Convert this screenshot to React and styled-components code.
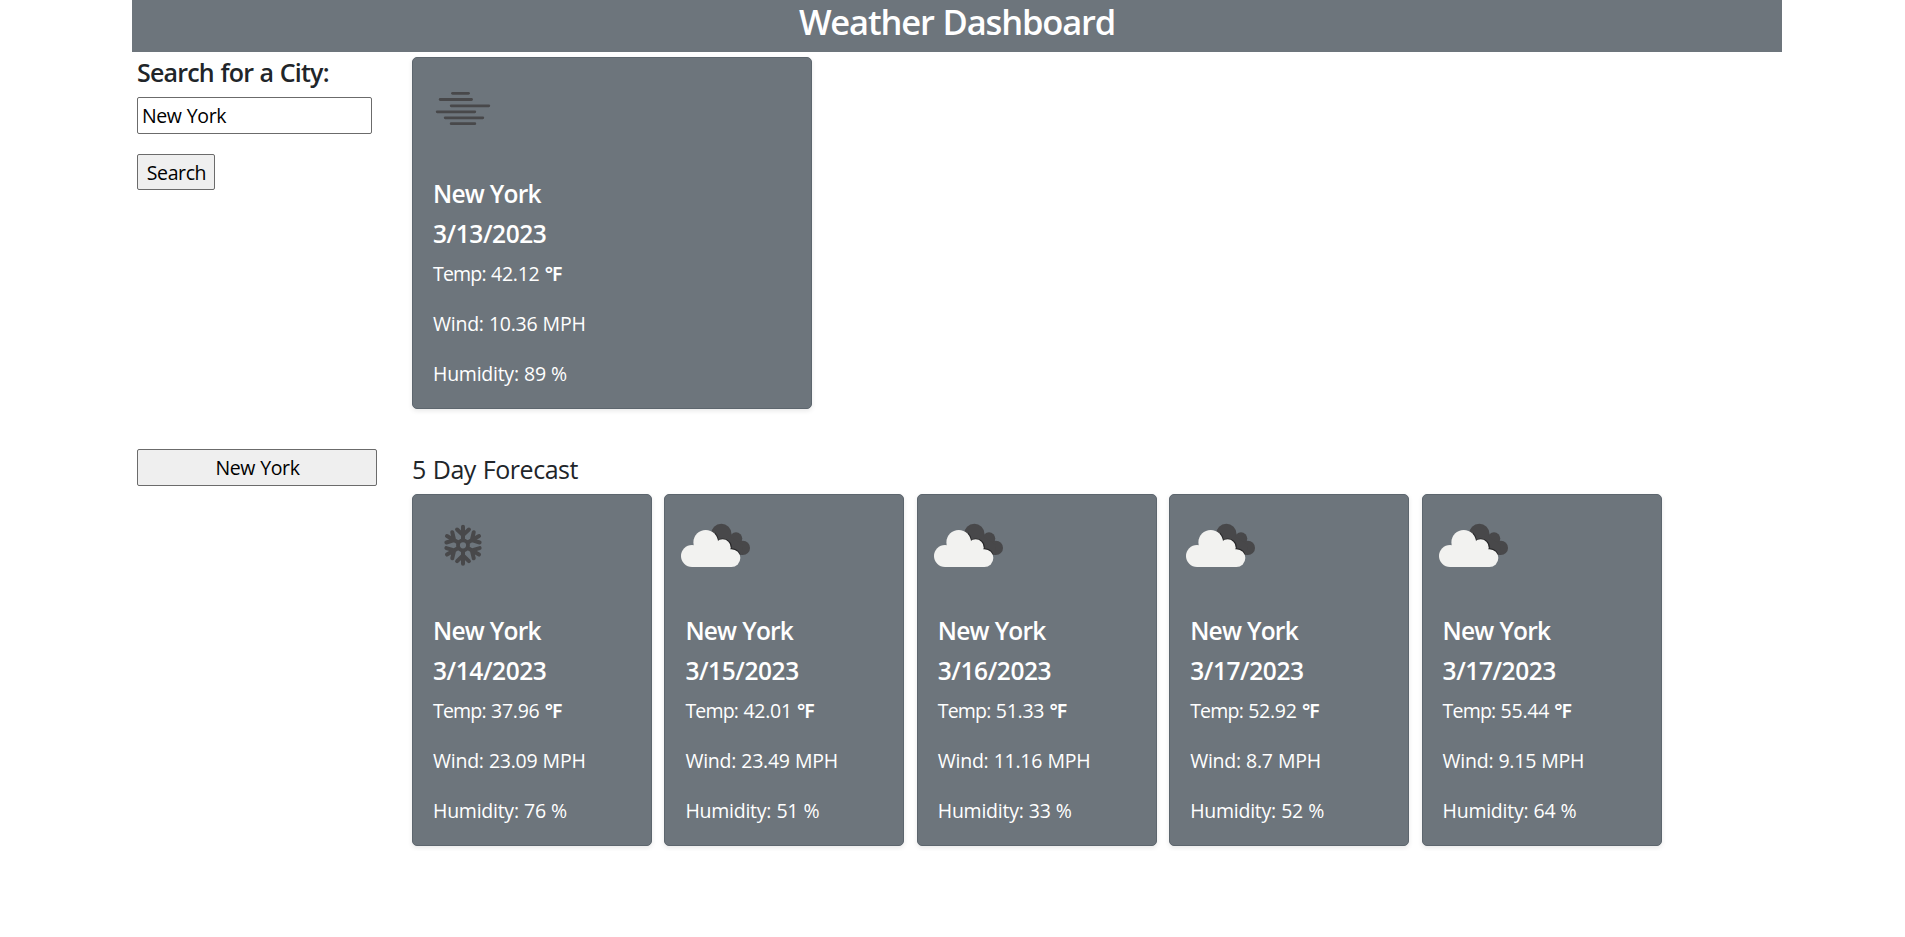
import React from "react";
import styled, { createGlobalStyle } from "styled-components";

const GlobalStyle = createGlobalStyle`
  *, *::before, *::after { box-sizing: border-box; }
  body {
    margin: 0;
    background: #fff;
    color: #212529;
    font-family: "Open Sans", "Noto Sans", "DejaVu Sans", sans-serif;
    font-size: 19.5px;
    line-height: 30px;
    letter-spacing: -0.25px;
    word-spacing: 0.4px;
  }
  h1, h2, h3, p { margin: 0; }
`;

const Page = styled.div`
  width: 1650px;
  margin-left: 132px;
`;

const Header = styled.header`
  height: 52px;
  background: #6d757c;
  color: #fff;
  text-align: center;
`;

const Title = styled.h1`
  font-size: 34.5px;
  line-height: 43px;
  font-weight: 600;
  letter-spacing: -1.15px;
  word-spacing: 1px;
`;

const Row = styled.div`
  display: grid;
  grid-template-columns: 275px 1fr;
`;

const Cell = styled.div`
  padding: 5px;
  padding-top: ${(p) => p.$top || 5}px;
`;

const Heading = styled.h2`
  font-size: 25px;
  line-height: 30px;
  font-weight: ${(p) => p.$weight || 500};
  letter-spacing: ${(p) => p.$spacing || "-0.45px"};
  word-spacing: 0.8px;
  margin-bottom: 10px;
`;

const SearchForm = styled.form`
  display: flex;
  flex-direction: column;
  align-items: flex-start;
  gap: 20px;
`;

const controlText = `
  font-family: inherit;
  font-size: 19.5px;
  line-height: 30px;
  letter-spacing: -0.4px;
  word-spacing: 0.6px;
  color: #000;
  border: 1px solid #6b6b6b;
  border-radius: 2px;
`;

const CityInput = styled.input`
  ${controlText}
  width: 235px;
  height: 37px;
  padding: 1px 4px;
  background: #fff;
  outline: none;
`;

const Button = styled.button`
  ${controlText}
  width: ${(p) => p.$width}px;
  height: ${(p) => p.$height}px;
  padding: 1px 0 0 1px;
  background: #efefef;
`;

const CardList = styled.div`
  display: flex;
  gap: 12.4px;
`;

const CardBox = styled.article`
  width: ${(p) => p.$width}px;
  height: 352px;
  flex: none;
  border: 1px solid #5d666e;
  border-radius: 5px;
  background: #6d757c;
  color: #fff;
  box-shadow: 0 2px 5px rgba(0, 0, 0, 0.09);
`;

const Icon = styled.svg`
  display: block;
  width: 100px;
  height: 100px;
`;

const CardBody = styled.div`
  padding: 21px 20px 19px;
`;

const CardTitle = styled.h3`
  font-size: 24.5px;
  line-height: 30px;
  font-weight: 600;
  letter-spacing: ${(p) => p.$spacing};
  margin-bottom: 10px;
`;

const Reading = styled.p`
  white-space: nowrap;
  & + & { margin-top: 20px; }
`;

const TempLabel = styled.span`
  letter-spacing: -0.8px;
`;

const Unit = styled.span`
  font-weight: 600;
`;

const MIST = [
  [38.3, 56.7, 35.3],
  [26, 59.7, 41.5],
  [37, 77, 47.8],
  [23, 63, 53.8],
  [31, 71, 59.8],
  [37, 63, 65.7],
];

function Mist() {
  return (
    <Icon viewBox="0 0 100 100" stroke="#48484a" strokeWidth="2.8" strokeLinecap="round">
      {MIST.map(([a, b, y]) => (
        <line key={y} x1={a + 1.2} x2={b - 1.2} y1={y} y2={y} />
      ))}
    </Icon>
  );
}

function Snow() {
  return (
    <Icon viewBox="0 0 100 100" stroke="#48484a" strokeLinecap="round" strokeLinejoin="round" fill="none">
      <g transform="translate(50 50.3)">
        <circle r="5" strokeWidth="3.8" />
        {[0, 60, 120, 180, 240, 300].map((a) => (
          <g key={a} transform={`rotate(${a})`}>
            <path d="M0 -6V-18.5M-5.9 -15.8L0 -10.2L5.9 -15.8" strokeWidth="4" />
          </g>
        ))}
      </g>
    </Icon>
  );
}

const FRONT_PUFFS = [
  [27, 61, 11],
  [40.7, 47.3, 12.3],
  [57.6, 52.4, 8.1],
  [66.4, 63.1, 8.9],
];

function Clouds() {
  return (
    <Icon viewBox="0 0 100 100">
      <g fill="#48484a">
        <circle cx="56.3" cy="39" r="10.2" />
        <circle cx="71" cy="43.6" r="6.3" />
        <circle cx="77.8" cy="52.9" r="7.2" />
        <path d="M52 42L66 42L78 50L77.8 60.1L70 58Z" />
      </g>
      <g fill="#242426">
        <path d="M50 37.5A13.2 13.2 0 0 1 53.9 45.4L50 50Z" />
        <path d="M54 44.3A9 9 0 0 1 66.6 54L56 54Z" />
        <path d="M66 53.3A9.7 9.7 0 0 1 75.5 60L66 62Z" />
      </g>
      <g fill="#f2f2f0">
        {FRONT_PUFFS.map(([x, y, r]) => (
          <circle key={x} cx={x} cy={y} r={r} />
        ))}
        <path d="M27 52H60L66.4 58V72H27Z" />
      </g>
    </Icon>
  );
}

const ICONS = { mist: Mist, snow: Snow, clouds: Clouds };

function WeatherCard({ width = 240, icon, date, temp, wind, humidity }) {
  const Picture = ICONS[icon];
  return (
    <CardBox $width={width}>
      <Picture />
      <CardBody>
        <CardTitle $spacing="-0.8px">New York</CardTitle>
        <CardTitle $spacing="-0.42px">{date}</CardTitle>
        <Reading>
          <TempLabel>Temp:</TempLabel> {temp} <Unit>℉</Unit>
        </Reading>
        <Reading>Wind: {wind} MPH</Reading>
        <Reading>Humidity: {humidity} %</Reading>
      </CardBody>
    </CardBox>
  );
}

const FORECAST = [
  { icon: "snow", date: "3/14/2023", temp: "37.96", wind: "23.09", humidity: 76 },
  { icon: "clouds", date: "3/15/2023", temp: "42.01", wind: "23.49", humidity: 51 },
  { icon: "clouds", date: "3/16/2023", temp: "51.33", wind: "11.16", humidity: 33 },
  { icon: "clouds", date: "3/17/2023", temp: "52.92", wind: "8.7", humidity: 52 },
  { icon: "clouds", date: "3/17/2023", temp: "55.44", wind: "9.15", humidity: 64 },
];

export default function App() {
  return (
    <>
      <GlobalStyle />
      <Page>
        <Header>
          <Title>Weather Dashboard</Title>
        </Header>
        <Row>
          <Cell>
            <Heading $weight={600} $spacing="-0.8px">Search for a City:</Heading>
            <SearchForm onSubmit={(e) => e.preventDefault()}>
              <CityInput defaultValue="New York" />
              <Button $width={78} $height={36}>Search</Button>
            </SearchForm>
          </Cell>
          <Cell>
            <WeatherCard width={400} icon="mist" date="3/13/2023" temp="42.12" wind="10.36" humidity={89} />
          </Cell>
        </Row>
        <Row>
          <Cell $top={35}>
            <Button $width={240} $height={37}>New York</Button>
          </Cell>
          <Cell $top={40}>
            <Heading>5 Day Forecast</Heading>
            <CardList>
              {FORECAST.map((day, i) => (
                <WeatherCard key={i} {...day} />
              ))}
            </CardList>
          </Cell>
        </Row>
      </Page>
    </>
  );
}
